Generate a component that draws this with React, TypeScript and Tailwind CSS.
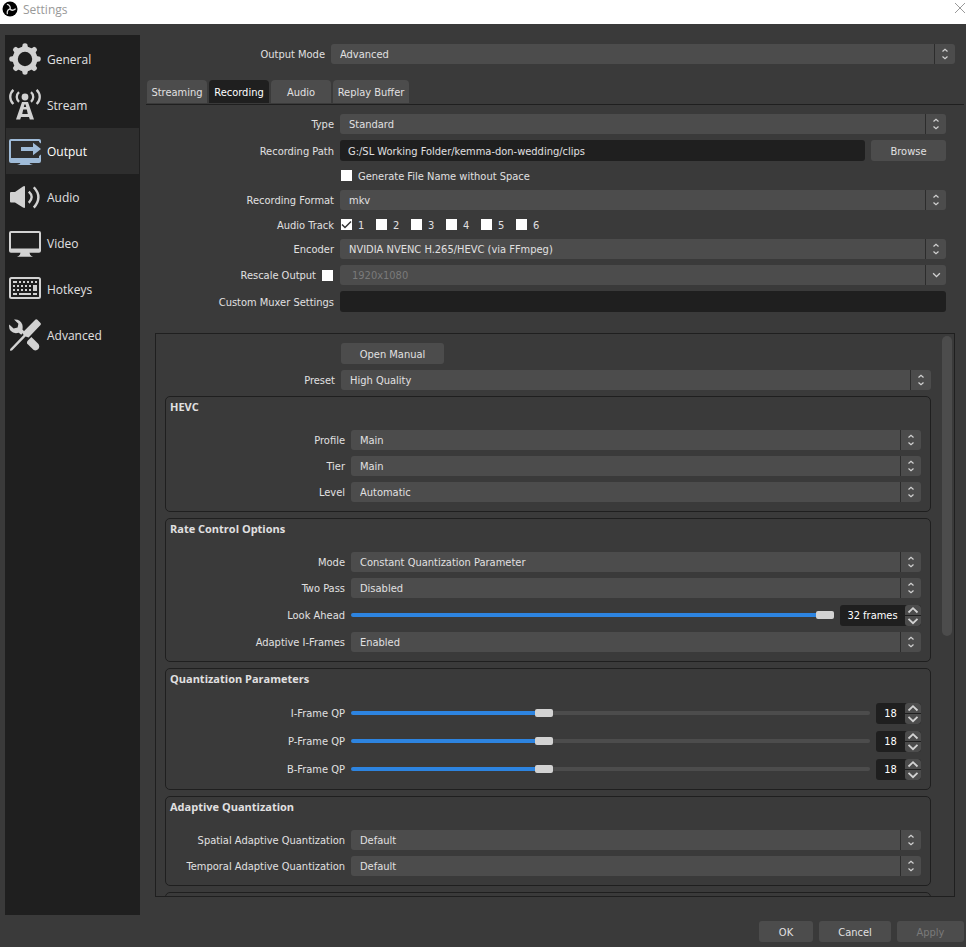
import { useState } from "react";
import type { ReactNode } from "react";

const icons: Record<string, ReactNode> = {
  General: (
    <>
      <circle cx="16" cy="16" r="9.8" fill="none" stroke="currentColor" strokeWidth="5.2" />
      {[0, 45, 90, 135, 180, 225, 270, 315].map((a) => (
        <path key={a} d="M10.500 6 L13 4.500 L13.800 1 Q16 -0.600 18.200 1 L19 4.500 L21.500 6 Z" transform={`rotate(${a} 16 16)`} />
      ))}
    </>
  ),
  Stream: (
    <>
      <circle cx="16" cy="8" r="3.4" />
      <path fillRule="evenodd" d="M13 13h6L25 30.500H20.800L20 28H12L11.200 30.500H7ZM15.400 15.500L14.800 18H17.200L16.600 15.500ZM14.200 20.600L13.200 25H18.800L17.800 20.600Z" />
      <path
        d="M4.400 .8C.2 4.800.2 11 4.400 15M10 3.200C7 6 7 10 10 12.800M27.600 .8C31.800 4.800 31.800 11 27.600 15M22 3.200C25 6 25 10 22 12.800"
        fill="none"
        stroke="currentColor"
        strokeWidth="2.3"
      />
    </>
  ),
  Output: (
    <>
      <path d="M2 4H30Q32 4 32 6V8.500L30 7V6H2V23H30V21L32 19.500V26Q32 28 30 28H20.500Q21 29.300 24 30H8Q11 29.300 11.500 28H2Q0 28 0 26V6Q0 4 2 4Z" />
      <path d="M12 12H24V7.700L32 14L24 20.300V16H12Z" />
    </>
  ),
  Audio: (
    <>
      <path d="M1 12Q1 11 2 11H6L14 5.400Q16 4.200 16 6V26Q16 27.800 14 26.600L6 21.500H2Q1 21.500 1 20.500Z" />
      <path d="M19.800 10.600Q25.600 16 19.800 21.800M24.800 6.200Q34 16 24.800 26.600" fill="none" stroke="currentColor" strokeWidth="2.400" />
    </>
  ),
  Video: (
    <path d="M2 4H30Q32 4 32 6V23.700Q32 25.700 30 25.700H20.500Q21 28.800 24 29.800H8Q11 28.800 11.500 25.700H2Q0 25.700 0 23.700V6Q0 4 2 4ZM2 6V21.500H30V6Z" fillRule="evenodd" />
  ),
  Hotkeys: (
    <>
      <rect x="1" y="5" width="30" height="20" rx="1.500" fill="none" stroke="currentColor" strokeWidth="2" />
      <path d="M4 8h4v2H4ZM10 8h2v2h-2ZM14 8h2v2h-2ZM18 8h2v2h-2ZM22 8h2v2h-2ZM26 8h2v2h-2ZM4 12h2v2H4ZM8 12h2v2H8ZM12 12h2v2h-2ZM16 12h2v2h-2ZM20 12h2v2h-2ZM24 12h4v6h-4ZM4 16h2v2H4ZM8 16h2v2H8ZM12 16h2v2h-2ZM16 16h2v2h-2ZM20 16h2v2h-2ZM4 20h4v2H4ZM10 20h12v2H10ZM24 20h4v2h-4Z" />
    </>
  ),
  Advanced: (
    <>
      <path d="M26.500 .6Q27.500 0 28.400 .8L31.500 4Q32.300 5 31.500 6L19.600 18.400L16.600 17.600L3 31.500L1 31.800L1.200 30L14.600 16L13.400 13.800Z" />
      <path d="M5 .6Q11 0 13.300 5.400Q14 8 13.400 10.400L15.400 12.600L12.200 15.800L9.800 13.800Q4.800 15.400 1.600 11.800Q-.4 9 .2 5.600L4.600 9.400L8.600 8.400L9.400 4.800Z" />
      <path d="M18 22.400L22.400 18L29.200 24.800Q31.200 27.400 29.400 30Q27 32.400 24.400 30.800L18 24.400Z" />
    </>
  ),
};

function Logo() {
  return (
    <svg className="size-4" viewBox="0 0 16 16" fill="none">
      <circle cx="8" cy="8" r="7.500" fill="#000" />
      {[0, 120, 240].map((a) => (
        <path key={a} d="M8.200 7.600Q8.600 4.600 5.400 3.400" stroke="#ddd" strokeWidth="1.300" strokeLinecap="round" transform={`rotate(${a} 8 8)`} />
      ))}
    </svg>
  );
}

function UpDown() {
  return (
    <svg className="h-3 w-2" viewBox="0 0 8 12" fill="none" stroke="currentColor" strokeWidth="1.2">
      <path d="M1.500 3.500L4 1.200L6.500 3.500M1.500 8.500L4 10.800L6.500 8.500" />
    </svg>
  );
}

function Chevron({ up, small }: { up?: boolean; small?: boolean }) {
  return (
    <svg className={small ? "h-1.5 w-[9px]" : "h-2 w-3"} viewBox="0 0 12 8" fill="none" stroke="currentColor" strokeWidth="1.8">
      <path d={up ? "M1.500 6.500L6 2.200L10.500 6.500" : "M1.500 1.800L6 6.200L10.500 1.800"} />
    </svg>
  );
}

function Select({ id, value, down, disabled }: { id: string; value: string; down?: boolean; disabled?: boolean }) {
  return (
    <div className="relative h-5 min-w-0 flex-1">
      <select
        id={id}
        aria-label={value}
        disabled={disabled}
        className={`block h-5 w-full appearance-none rounded-[3px] bg-[#4c4c4c] pt-0.5 pr-6 outline-none ${disabled ? "pl-3 text-[#7a7a7a]" : "pl-[9px]"}`}
      >
        <option>{value}</option>
      </select>
      <span className="pointer-events-none absolute inset-y-0 right-0 flex w-[21px] items-center justify-center border-l border-[#2c2c2c] text-[#d2d2d2]">
        {down ? <Chevron small /> : <UpDown />}
      </span>
    </div>
  );
}

// wide labels are used by the outer form, narrow ones inside the encoder panel
function Row({ label, id, wide, children }: { label: string; id: string; wide?: boolean; children: ReactNode }) {
  return (
    <div className="flex items-center gap-1.5">
      <label htmlFor={id} className={`shrink-0 pt-0.5 text-right whitespace-nowrap ${wide ? "w-[179px]" : "w-[170px]"}`}>
        {label}
      </label>
      {children}
    </div>
  );
}

function SelectRow({ label, value, wide }: { label: string; value: string; wide?: boolean }) {
  return (
    <Row label={label} id={label} wide={wide}>
      <Select id={label} value={value} />
    </Row>
  );
}

function SliderRow({ label, start, max, unit }: { label: string; start: number; max: number; unit?: string }) {
  const [value, setValue] = useState(start);
  const pct = (value / max) * 100;
  return (
    <div className="flex h-[22px] items-center gap-1.5">
      <label htmlFor={label} className="w-[170px] shrink-0 pt-0.5 text-right whitespace-nowrap">
        {label}
      </label>
      <input
        id={label}
        type="range"
        min={0}
        max={max}
        value={value}
        onChange={(e) => setValue(Number(e.target.value))}
        style={{ backgroundImage: `linear-gradient(to right, #2d84e0 ${pct}%, #4c4c4c ${pct}%)` }}
        className="h-1 min-w-0 flex-1 appearance-none rounded-full [&::-webkit-slider-thumb]:h-2 [&::-webkit-slider-thumb]:w-[18px] [&::-webkit-slider-thumb]:appearance-none [&::-webkit-slider-thumb]:rounded-[2px] [&::-webkit-slider-thumb]:bg-[#d2d2d2]"
      />
      <div className="flex h-[21px] overflow-hidden rounded-[3px] bg-[#1f1f1f]">
        <input
          aria-label={`${label} value`}
          readOnly
          value={unit ? `${value} ${unit}` : value}
          className={`bg-transparent pt-0.5 text-center text-white outline-none ${unit ? "w-[65px]" : "w-[29px]"}`}
        />
        <div className="flex w-4 flex-col gap-px text-[#d2d2d2]">
          <button aria-label={`Increase ${label}`} onClick={() => setValue(Math.min(max, value + 1))} className="flex flex-1 items-center justify-center rounded-t-[3px] bg-[#4c4c4c]">
            <Chevron up />
          </button>
          <button aria-label={`Decrease ${label}`} onClick={() => setValue(Math.max(0, value - 1))} className="flex flex-1 items-center justify-center rounded-b-[3px] bg-[#4c4c4c]">
            <Chevron />
          </button>
        </div>
      </div>
    </div>
  );
}

function Group({ title, children }: { title: string; children?: ReactNode }) {
  return (
    <section className="shrink-0 rounded-[5px] border border-[#1f1f1f] pb-[9px]">
      <h2 className="h-[33px] pt-0.5 pl-1 font-['Open_Sans',sans-serif] leading-4 font-bold">{title}</h2>
      <div className="flex flex-col gap-1.5 px-[9px]">{children}</div>
    </section>
  );
}

function Check({ id, label, checked }: { id: string; label?: string; checked?: boolean }) {
  return (
    <span className="flex items-center gap-1.5">
      <span className="relative size-[11px]">
        <input id={id} type="checkbox" defaultChecked={checked} className="peer block size-[11px] appearance-none bg-white" />
        <svg className="pointer-events-none absolute inset-0 hidden size-[11px] peer-checked:block" viewBox="0 0 11 11" fill="none" stroke="#333" strokeWidth="1.500">
          <path d="M1 5.500L4 8.500L10 2.500" />
        </svg>
      </span>
      {label && <label htmlFor={id} className="min-w-[7px] pt-0.5">{label}</label>}
    </span>
  );
}

const button = "h-[21px] rounded-[3px] bg-[#4c4c4c] pt-0.5 text-center";

export default function App() {
  const [page, setPage] = useState("Output");
  const [tab, setTab] = useState("Recording");

  return (
    <div className="flex h-screen flex-col bg-[#3a3a3a] font-['DejaVu_Sans_Condensed','DejaVu_Sans',sans-serif] text-[11px] leading-4 text-[#e1e0e1]">
      <header className="flex h-6 shrink-0 items-start justify-between bg-white pl-0.5 font-['Open_Sans',sans-serif] text-xs text-[#999]">
        <h1 className="flex items-center gap-[5px]">
          <Logo />
          <span className="pt-0.5">Settings</span>
        </h1>
        <button aria-label="Close" className="mt-0.5">
          <svg className="size-3" viewBox="0 0 12 12" fill="none" stroke="currentColor">
            <path d="M1 1L11 11M11 1L1 11" />
          </svg>
        </button>
      </header>

      <div className="flex min-h-0 flex-1 gap-1.5 pt-[11px] pr-0.5 pl-[5px]">
        <nav className="w-[135px] shrink-0 bg-[#1f1f1f] p-px font-['Open_Sans',sans-serif] text-xs">
          {Object.keys(icons).map((name) => (
            <button
              key={name}
              onClick={() => setPage(name)}
              className={`flex h-[46px] w-full items-center gap-1.5 pl-[3px] ${page === name ? "bg-[#2e2e2e] text-white" : ""}`}
            >
              <svg className={`size-8 ${page === name ? "text-[#9fbbd8]" : "text-[#d2d2d2]"}`} viewBox="0 0 32 32" fill="currentColor">
                {icons[name]}
              </svg>
              <span className="pt-0.5">{name}</span>
            </button>
          ))}
        </nav>

        <main className="flex min-w-0 flex-1 flex-col pt-[9px] pb-[18px]">
          <div className="pr-[9px]">
            <SelectRow label="Output Mode" value="Advanced" wide />
          </div>

          {/* tabs */}
          <div className="mt-4 flex h-[25px] shrink-0 gap-0.5 border-b border-[#1f1f1f] pl-px">
            {["Streaming", "Recording", "Audio", "Replay Buffer"].map((name) => (
              <button
                key={name}
                onClick={() => setTab(name)}
                className={`h-[23px] rounded-t-[4px] pt-0.5 whitespace-nowrap ${name === "Replay Buffer" ? "w-[76px]" : "w-[60px]"} ${tab === name ? "bg-[#1f1f1f] text-white" : "bg-[#4c4c4c]"}`}
              >
                {name}
              </button>
            ))}
          </div>

          {/* recording form */}
          <form className="flex flex-col gap-1.5 pt-[9px] pr-[18px] pl-[9px]">
            <SelectRow label="Type" value="Standard" wide />
            <Row label="Recording Path" id="path" wide>
              <input id="path" defaultValue="G:/SL Working Folder/kemma-don-wedding/clips" className="h-[21px] min-w-0 flex-1 rounded-[3px] bg-[#1f1f1f] px-2 pt-0.5 outline-none" />
              <button type="button" className={`${button} w-[75px]`}>Browse</button>
            </Row>
            <div className="flex h-[17px] items-center pl-[186px]">
              <Check id="nospace" label="Generate File Name without Space" />
            </div>
            <SelectRow label="Recording Format" value="mkv" wide />
            <div className="flex h-[17px] items-center gap-[7px]">
              <span className="w-[179px] shrink-0 pt-0.5 text-right">Audio Track</span>
              <div className="flex gap-[11px]">
                {["1", "2", "3", "4", "5", "6"].map((n) => (
                  <Check key={n} id={`track${n}`} label={n} checked={n === "1"} />
                ))}
              </div>
            </div>
            <SelectRow label="Encoder" value="NVIDIA NVENC H.265/HEVC (via FFmpeg)" wide />
            <div className="flex items-center gap-[7px]">
              <span className="flex w-[178px] shrink-0 items-center justify-end gap-1.5">
                <label htmlFor="rescale" className="pt-0.5">Rescale Output</label>
                <Check id="rescale" />
              </span>
              <Select id="resolution" value="1920x1080" down disabled />
            </div>
            <Row label="Custom Muxer Settings" id="muxer" wide>
              <input id="muxer" className="h-[21px] min-w-0 flex-1 rounded-[3px] bg-[#1f1f1f] px-2 outline-none" />
            </Row>
          </form>

          {/* encoder settings */}
          <div className="mt-[21px] mr-[9px] ml-[9px] flex min-h-0 flex-1 border border-[#1f1f1f] pl-[9px]">
            <div className="flex min-w-0 flex-1 flex-col gap-1.5 overflow-hidden pt-[9px]">
              <div className="flex shrink-0 pl-[176px]">
                <button className={`${button} w-[103px]`}>Open Manual</button>
              </div>
              <SelectRow label="Preset" value="High Quality" />
              <Group title="HEVC">
                <SelectRow label="Profile" value="Main" />
                <SelectRow label="Tier" value="Main" />
                <SelectRow label="Level" value="Automatic" />
              </Group>
              <Group title="Rate Control Options">
                <SelectRow label="Mode" value="Constant Quantization Parameter" />
                <SelectRow label="Two Pass" value="Disabled" />
                <SliderRow label="Look Ahead" start={32} max={32} unit="frames" />
                <SelectRow label="Adaptive I-Frames" value="Enabled" />
              </Group>
              <Group title="Quantization Parameters">
                <SliderRow label="I-Frame QP" start={18} max={49} />
                <SliderRow label="P-Frame QP" start={18} max={49} />
                <SliderRow label="B-Frame QP" start={18} max={49} />
              </Group>
              <Group title="Adaptive Quantization">
                <SelectRow label="Spatial Adaptive Quantization" value="Default" />
                <SelectRow label="Temporal Adaptive Quantization" value="Default" />
              </Group>
              <Group title="" />
            </div>
            <div className="ml-[11px] w-3 shrink-0 pt-0.5">
              <div className="h-[300px] w-2.5 rounded-full bg-[#4c4c4c]" />
            </div>
          </div>
        </main>
      </div>

      <footer className="flex shrink-0 justify-end gap-1.5 pt-1.5 pr-0.5 pb-[5px]">
        <button className={`${button} w-[54px]`}>OK</button>
        <button className={`${button} w-[72px]`}>Cancel</button>
        <button disabled className={`${button} w-[67px] text-[#7a7a7a]`}>Apply</button>
      </footer>
    </div>
  );
}
